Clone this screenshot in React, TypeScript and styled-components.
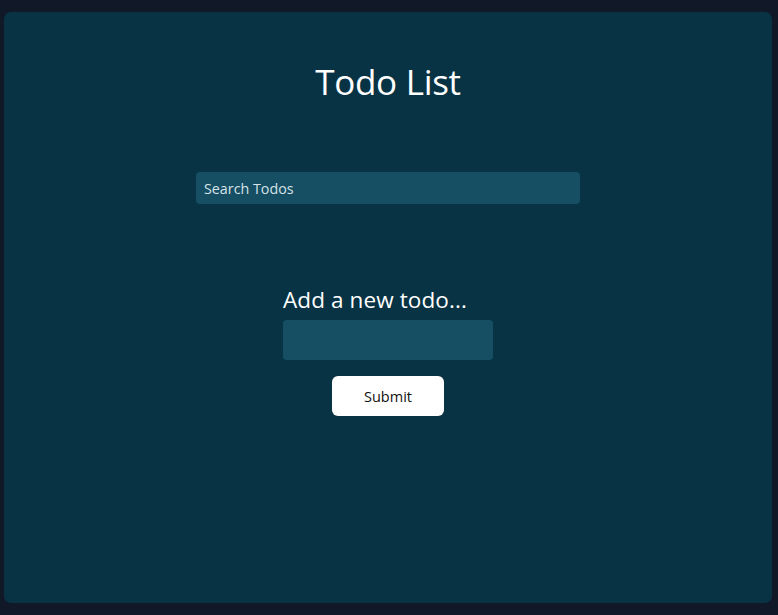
import React from "react";
import styled, { createGlobalStyle } from "styled-components";

const Global = createGlobalStyle`
  html, body { margin: 0; padding: 0; background: #111827; }
  body { font-family: "Open Sans", "Noto Sans", sans-serif; }
  * { box-sizing: border-box; }
`;

const Page = styled.div`
  min-height: 615px;
  padding: 12px 6px 12px 4px;
  display: flex;
`;

const Card = styled.main`
  flex: 1;
  background: #083344;
  border-radius: 7px;
  display: flex;
  flex-direction: column;
  align-items: center;
  padding-top: 56px;
  height: 591px;
`;

const Title = styled.h1`
  margin: 0;
  font-weight: 400;
  font-size: 35px;
  line-height: 28px;
  color: #ffffff;
  letter-spacing: -0.3px;
`;

const Search = styled.input`
  margin-top: 76px;
  width: 384px;
  height: 32px;
  border: none;
  outline: none;
  border-radius: 4px;
  background: #164e63;
  color: #e5eef2;
  padding: 0 8px;
  font-family: "Open Sans", sans-serif;
  font-size: 14.3px;
  &::placeholder { color: #d6e2e7; }
`;

const Form = styled.form`
  margin-top: 81px;
  width: 210px;
  display: flex;
  flex-direction: column;
`;

const Label = styled.label`
  color: #ffffff;
  font-size: 22.5px;
  line-height: 30px;
  letter-spacing: 0.1px;
`;

const TodoInput = styled.input`
  margin-top: 5px;
  width: 210px;
  height: 40px;
  border: none;
  outline: none;
  border-radius: 4px;
  background: #164e63;
  color: #fff;
  padding: 0 8px;
  font-size: 16px;
`;

const SubmitButton = styled.button`
  align-self: center;
  margin-top: 16px;
  width: 112px;
  height: 40px;
  border: none;
  border-radius: 6px;
  background: #ffffff;
  color: #111;
  font-family: "Open Sans", sans-serif;
  font-size: 14.5px;
  padding-top: 2px;
  cursor: pointer;
`;

export default function App() {
  return (
    <>
      <Global />
      <Page>
        <Card>
          <Title>Todo List</Title>
          <Search placeholder="Search Todos" />
          <Form onSubmit={(e) => e.preventDefault()}>
            <Label htmlFor="todo">Add a new todo...</Label>
            <TodoInput id="todo" />
            <SubmitButton type="submit">Submit</SubmitButton>
          </Form>
        </Card>
      </Page>
    </>
  );
}
